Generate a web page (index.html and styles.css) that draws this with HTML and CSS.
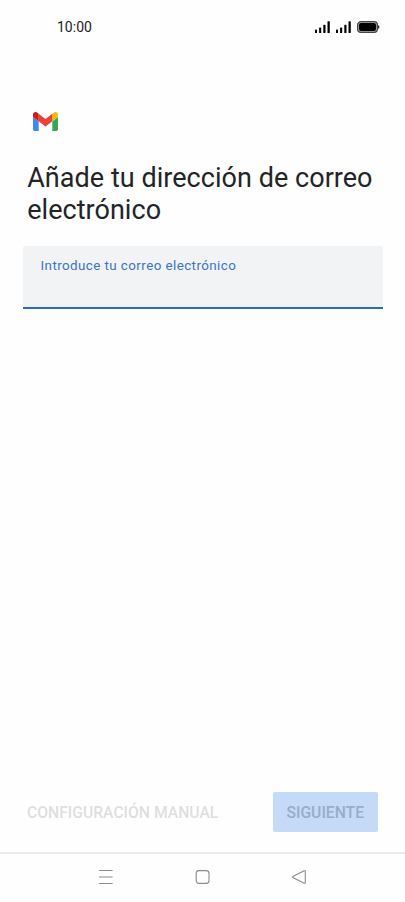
FILE: index.html
```html
<!DOCTYPE html>
<html lang="es">
<head>
<meta charset="utf-8">
<meta name="viewport" content="width=device-width, initial-scale=1">
<title>Gmail</title>
<link rel="stylesheet" href="styles.css">
</head>
<body>
<div class="screen">
  <header class="status">
    <span class="clock">10:00</span>
    <svg class="status-icons" width="66" height="14" viewBox="0 0 66 14">
      <g id="signal">
        <rect x="1" y="9.6" width="2" height="3.4" rx=".6"/>
        <rect x="5.1" y="7.6" width="2.1" height="5.4" rx=".6"/>
        <rect x="9.3" y="4.8" width="2.2" height="8.2" rx=".6"/>
        <rect x="13.5" y="1.2" width="2.3" height="11.8" rx=".6"/>
      </g>
      <use href="#signal" x="21"/>
      <rect x="43.6" y="1.6" width="19.8" height="10.8" rx="3.3" fill="#aaa" stroke="#444" stroke-width="1.2"/>
      <rect x="45" y="3" width="17" height="8" rx="2"/>
      <path d="M64.2 5.2q1.2.2 1.2 1.8t-1.2 1.8z"/>
    </svg>
  </header>
  <main class="content">
    <svg class="logo" width="25" height="19" viewBox="52 42 88 66" preserveAspectRatio="none">
      <path fill="#4285f4" d="M58 108h14V74L52 59v43c0 3.32 2.69 6 6 6"/>
      <path fill="#34a853" d="M120 108h14c3.32 0 6-2.69 6-6V59l-20 15"/>
      <path fill="#fbbc04" d="M120 48v26l20-15v-8c0-7.42-8.47-11.65-14.4-7.2"/>
      <path fill="#ea4335" d="M72 74V48l24 18 24-18v26L96 92"/>
      <path fill="#c5221f" d="M52 51v8l20 15V48l-5.6-4.2c-5.94-4.45-14.4-.22-14.4 7.2"/>
    </svg>
    <h1 class="title">Añade tu dirección de correo electrónico</h1>
    <label class="field">
      <span class="field-label">Introduce tu correo electrónico</span>
      <input class="field-input" type="email">
    </label>
  </main>
  <div class="actions">
    <button class="manual" disabled>CONFIGURACIÓN MANUAL</button>
    <button class="next" disabled>SIGUIENTE</button>
  </div>
  <nav class="navbar">
    <svg width="16" height="16" viewBox="0 0 16 16"><path d="M1 1.5h13.6M1 8h13.6M1 14.5h13.6"/></svg>
    <svg width="16" height="16" viewBox="0 0 16 16"><rect x="1.2" y="1.6" width="12.8" height="12.8" rx="2.8"/></svg>
    <svg width="16" height="16" viewBox="0 0 16 16"><path d="M13.2 1.8 2.3 7.2q-1.3.8 0 1.6l10.9 5.4q1.1.4 1.1-.8V2.6q0-1.2-1.1-.8z"/></svg>
  </nav>
</div>
</body>
</html>
```
FILE: styles.css
```css
* { box-sizing: border-box; }

body {
  margin: 0;
  background: #fefefe;
  font-family: Roboto, sans-serif;
}

.screen {
  display: flex;
  flex-direction: column;
  height: 902px;
}

.status {
  display: flex;
  justify-content: space-between;
  align-items: center;
  height: 54px;
  padding: 0 25px 0 57px;
}

.clock {
  font-size: 14px;
  line-height: 16px;
  color: #1c1c1c;
}

.status-icons { fill: #000; }

.content {
  flex: 1;
  padding: 58px 22.5px 0;
}

.logo {
  display: block;
  margin-left: 10.2px;
}

.title {
  margin: 31px -5px 0 4.7px;
  font-size: 27px;
  line-height: 32px;
  letter-spacing: 0.04px;
  font-weight: 400;
  color: #232427;
}

.field {
  display: block;
  height: 63px;
  margin-top: 20px;
  padding: 11px 18px 0;
  background: #f1f3f4;
  border-bottom: 2px solid #2a69bd;
  border-radius: 2px 2px 0 0;
}

.field-label {
  display: block;
  font-size: 13.4px;
  line-height: 17px;
  letter-spacing: 0.42px;
  color: #3c75c4;
}

.field-input {
  display: block;
  width: 100%;
  height: 24px;
  padding: 0;
  border: 0;
  outline: 0;
  background: transparent;
}

.actions {
  display: flex;
  justify-content: space-between;
  align-items: center;
  height: 40px;
  margin-bottom: 20px;
  padding: 0 27px;
}

.manual,
.next {
  padding: 0;
  border: 0;
  background: transparent;
  font: 500 15.7px/41px Roboto, sans-serif;
  white-space: nowrap;
}

.manual { color: #dfdfdf; }

.next {
  width: 105.5px;
  height: 40px;
  border-radius: 2px;
  background: #c4daf6;
  color: #97adcb;
}

.navbar {
  display: flex;
  justify-content: space-between;
  height: 50px;
  padding: 15px 98px 0;
  border-top: 2px solid #ebebeb;
}

.navbar svg {
  fill: none;
  stroke: #8b8b8b;
  stroke-width: 1.1;
}
```
